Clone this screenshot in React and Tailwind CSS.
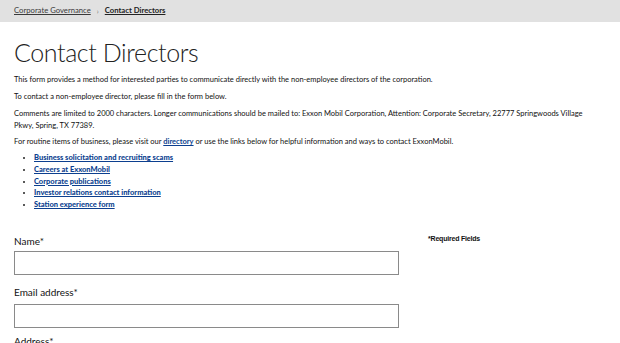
import React from 'react';

const links = [
  'Business solicitation and recruiting scams',
  'Careers at ExxonMobil',
  'Corporate publications',
  'Investor relations contact information',
  'Station experience form',
];

const ContactDirectors = () => {
  const bodyFont = { fontFamily: 'Lato, "Noto Sans", sans-serif' };

  return (
    <div className="min-h-screen bg-white text-[#111]" style={bodyFont}>
      {/* breadcrumb */}
      <div className="h-[22px] bg-[#e1e1e1] px-[14px] flex items-center text-[7.7px] text-[#3a3a3a]">
        <a href="#" className="underline">Corporate Governance</a>
        <span className="mx-[6px] text-[7px] text-[#777]">›</span>
        <a href="#" className="underline font-bold text-[#222]">Contact Directors</a>
      </div>

      <div className="px-[14px]">
        <h1 className="mt-[15px] text-[25px] leading-[30px] font-light tracking-[-0.4px] text-[#222]">Contact Directors</h1>

        <div className="mt-[7px] text-[7.5px] leading-[12px]">
          <p className="mb-[5px]">This form provides a method for interested parties to communicate directly with the non-employee directors of the corporation.</p>
          <p className="mb-[5px]">To contact a non-employee director, please fill in the form below.</p>
          <p className="mb-[4px] max-w-[585px]">Comments are limited to 2000 characters. Longer communications should be mailed to: Exxon Mobil Corporation, Attention: Corporate Secretary, 22777 Springwoods Village Pkwy, Spring, TX 77389.</p>
          <p>
            For routine items of business, please visit our{' '}
            <a href="#" className="font-bold underline text-[#0c3f8f]">directory</a>{' '}
            or use the links below for helpful information and ways to contact ExxonMobil.
          </p>
          <ul className="mt-[4px] pl-[20px] list-disc">
            {links.map((l) => (
              <li key={l} className="leading-[11.75px] marker:text-[#222]">
                <a href="#" className="font-black underline text-[#0c3f8f]">{l}</a>
              </li>
            ))}
          </ul>
        </div>

        <div className="mt-[23px] flex items-start">
          <div className="w-[385px]">
            <label className="block text-[10px] leading-[14px] text-[#111]">Name*</label>
            <input type="text" className="mt-[3px] block w-full h-[24px] border border-[#8a8a8a] bg-white" />
            <label className="mt-[10px] block text-[10px] leading-[14px] text-[#111]">Email address*</label>
            <input type="text" className="mt-[5px] block w-full h-[24px] border border-[#8a8a8a] bg-white" />
            <label className="mt-[6px] block text-[10px] leading-[14px] text-[#111]">Address*</label>
          </div>
          <div className="ml-[29px]">
            <span
              className="block text-[7px] leading-[10px] font-bold tracking-[-0.2px] text-[#111]"
              style={{ fontFamily: '"Liberation Sans", Arial, sans-serif' }}
            >
              *Required Fields
            </span>
          </div>
        </div>
      </div>
    </div>
  );
};

export default ContactDirectors;
